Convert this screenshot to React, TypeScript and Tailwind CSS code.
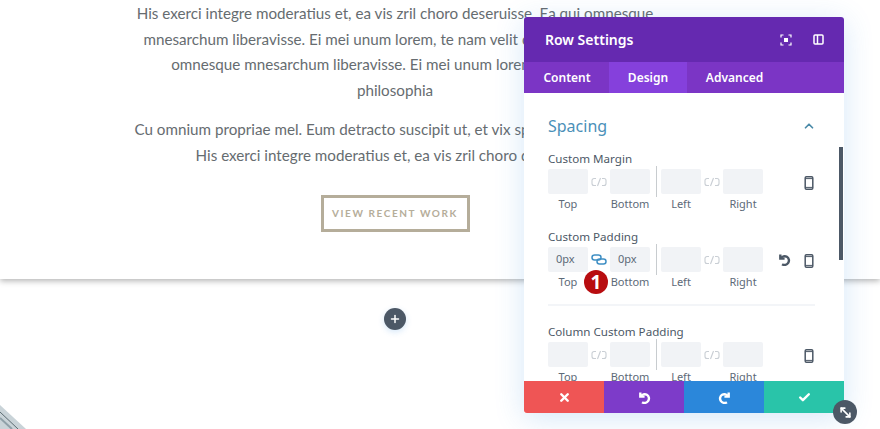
import { Check, ChevronUp, MoveDiagonal, Plus, X } from 'lucide-react';

const body = "font-['Lato','Noto_Sans',sans-serif]";

function LinkIcon({ active }: { active?: boolean }) {
  if (active) {
    return (
      <svg width="16" height="11" viewBox="0 0 16 11" fill="none" stroke="#3f8fc4" strokeWidth="1.5">
        <rect x="1" y="1" width="9" height="5" rx="2.5" />
        <rect x="6" y="5" width="9" height="5" rx="2.5" />
      </svg>
    );
  }
  return (
    <svg width="16" height="10" viewBox="0 0 16 10" fill="none" stroke="#c9ced4" strokeWidth="1.1">
      <path d="M5 1.5H3a2 2 0 0 0-2 2v3a2 2 0 0 0 2 2h2" />
      <path d="M11 1.5h2a2 2 0 0 1 2 2v3a2 2 0 0 1-2 2h-2" />
      <path d="M9.5 1 6.5 9" />
    </svg>
  );
}

// same arrow in the panel and the footer, redo is this one mirrored
function UndoIcon({ size, className }: { size: number; className?: string }) {
  return (
    <svg width={size} height={size} viewBox="0 0 14 14" fill="none" stroke="currentColor" strokeWidth="2.6" className={className}>
      <path d="M2.5 1.5v4.6h4.6" />
      <path d="M3 5.8a4.7 4.7 0 1 1 1.4 6.2" />
    </svg>
  );
}

function PhoneIcon() {
  return (
    <svg width="14" height="14" viewBox="0 0 14 14" fill="none" stroke="#4c5866" strokeWidth="1.5" className="ml-[10px] mt-[2px]">
      <rect x="3.2" y="0.8" width="7.6" height="12.4" rx="1.2" />
      <path d="M3.2 2.6h7.6M3.2 11.4h7.6" strokeWidth="1" />
    </svg>
  );
}

function Field({ value }: { value?: string }) {
  return (
    <div className="flex h-[25px] w-10 items-center rounded-[2px] bg-[#f1f3f6] pl-2 text-[11px] text-[#5d6a78]">
      {value}
    </div>
  );
}

function SpacingRow({ label, top, bottom, linked, undo }: { label: string; top?: string; bottom?: string; linked?: boolean; undo?: boolean }) {
  return (
    <div>
      <p className="h-[17px] text-[11.6px] leading-[17px] text-[#4c5866]">{label}</p>
      <div className="mt-[2px] flex h-[25px] items-center">
        <Field value={top} />
        <div className="flex w-[22px] justify-center"><LinkIcon active={linked} /></div>
        <Field value={bottom} />
        <div className="ml-[6px] mr-[4px] -mt-[3px] h-[31px] w-[1px] self-start bg-[#c8cccf]" />
        <Field />
        <div className="flex w-[22px] justify-center"><LinkIcon /></div>
        <Field />
        <div className="ml-[13px] flex w-4 justify-center">
          {undo && <UndoIcon size={13} className="text-[#4c5866]" />}
        </div>
        <PhoneIcon />
      </div>
      <div className="mt-[1px] flex h-[17px] text-center text-[11px] leading-[17px] text-[#5d6a78]">
        <span className="w-10">Top</span>
        <span className="ml-[22px] w-10">Bottom</span>
        <span className="ml-[11px] w-10">Left</span>
        <span className="ml-[22px] w-10">Right</span>
      </div>
    </div>
  );
}

function RowSettings() {
  return (
    <div className="absolute left-[524px] top-[17px] flex h-[396px] w-[320px] flex-col rounded-t-[3px] bg-white shadow-[0_5px_30px_rgba(43,135,218,0.2)] font-['Noto_Sans',sans-serif]">
      <div className="flex h-[45px] shrink-0 items-center justify-between rounded-t-[3px] bg-[#6529b0] pl-[21px] pr-5 text-white">
        <span className="text-[14px] font-semibold">Row Settings</span>
        <div className="flex items-center gap-[21px]">
          <svg width="12" height="12" viewBox="0 0 12 12" fill="none" stroke="white" strokeWidth="1.2">
            <path d="M1 3.5V1h2.5M8.5 1H11v2.5M11 8.5V11H8.5M3.5 11H1V8.5" />
            <rect x="4" y="4" width="4" height="4" fill="white" stroke="none" />
          </svg>
          <svg width="11" height="11" viewBox="0 0 11 11" fill="none" stroke="white" strokeWidth="1.5">
            <rect x="1" y="1" width="9" height="9" rx="1" />
            <path d="M4.5 1v9" />
          </svg>
        </div>
      </div>
      <div className="flex h-[31px] shrink-0 bg-[#7b35c5] text-[12px] font-semibold text-white">
        <div className="flex w-[85px] items-center justify-center pl-[1px]">Content</div>
        <div className="flex w-[78px] items-center justify-center bg-[#8540dc]">Design</div>
        <div className="flex w-[95px] items-center justify-center">Advanced</div>
      </div>
      <div className="relative min-h-0 flex-1 overflow-hidden px-6">
        <div className="flex h-[57px] items-center justify-between pt-2">
          <span className="text-[16px] text-[#4a90b8]">Spacing</span>
          <ChevronUp size={14} strokeWidth={3} className="mr-1 text-[#4a8aa8]" />
        </div>
        <SpacingRow label="Custom Margin" />
        <div className="h-4" />
        <SpacingRow label="Custom Padding" top="0px" bottom="0px" linked undo />
        <div className="mb-[17px] mt-[14px] h-[2px] w-[267px] bg-[#f3f5f8]" />
        <SpacingRow label="Column Custom Padding" />
        <div className="absolute right-[1px] top-[54px] h-[113px] w-[4px] bg-[#4c5866]" />
      </div>
      <div className="grid h-[32px] shrink-0 grid-cols-4 text-white">
        <div className="flex items-center justify-center rounded-bl-[3px] bg-[#ef5555]"><X size={13} strokeWidth={4.5} /></div>
        <div className="flex items-center justify-center bg-[#7d3bc9]"><UndoIcon size={13} /></div>
        <div className="flex items-center justify-center bg-[#2b87da]"><UndoIcon size={13} className="-scale-x-100" /></div>
        <div className="flex items-center justify-center rounded-br-[3px] bg-[#29c4a9]"><Check size={13} strokeWidth={4.5} /></div>
      </div>
      <div className="absolute left-[309px] top-[383px] flex h-6 w-6 items-center justify-center rounded-full bg-[#4c5866] text-white">
        <MoveDiagonal size={15} strokeWidth={2.5} className="rotate-90" />
      </div>
      <div className="absolute left-[60px] top-[253px] flex h-6 w-6 items-center justify-center rounded-full bg-[#b80d10] text-[19px] font-bold leading-none text-white">1</div>
    </div>
  );
}

export default function App() {
  return (
    <div className={`relative h-[429px] w-[880px] overflow-hidden bg-white ${body}`}>
      <section className="h-[279px] overflow-hidden bg-white shadow-[0_2px_6px_rgba(0,0,0,0.3)]">
        <div className="flex w-[790px] flex-col items-center whitespace-nowrap pt-px text-center text-[15.2px] leading-[25.5px] text-[#666c70]">
          <p>His exerci integre moderatius et, ea vis zril choro deseruisse. Ea qui omnesque</p>
          <p>mnesarchum liberavisse. Ei mei unum lorem, te nam velit omnesque eum vix</p>
          <p>omnesque mnesarchum liberavisse. Ei mei unum lorem, te nam velit</p>
          <p>philosophia</p>
          <p className="mt-[14px]">Cu omnium propriae mel. Eum detracto suscipit ut, et vix sprendid philosophia.</p>
          <p>His exerci integre moderatius et, ea vis zril choro deseruisse.</p>
          <div className="mt-[27px] flex h-[37px] w-[149px] items-center justify-center border-[3px] border-[#b5ad9a] text-[10px] font-bold tracking-[1.6px] text-[#b5ad9a]">
            VIEW RECENT WORK
          </div>
        </div>
      </section>
      <div className="flex w-[790px] justify-center pt-[29px]">
        <div className="flex h-[22px] w-[22px] items-center justify-center rounded-full bg-[#4c5866] text-white shadow-[0_2px_6px_rgba(43,135,218,0.2)]">
          <Plus size={12} strokeWidth={3} />
        </div>
      </div>
      <svg className="absolute bottom-0 left-0" width="28" height="26" viewBox="0 0 28 26" fill="none">
        <path d="M0 2 26 26H0Z" fill="#c9d3d8" />
        <path d="M0 9 18 26" stroke="#5c6b72" strokeWidth="1" />
        <path d="M0 15 12 26" stroke="#8fa0a8" strokeWidth="2" />
      </svg>
      <RowSettings />
    </div>
  );
}
